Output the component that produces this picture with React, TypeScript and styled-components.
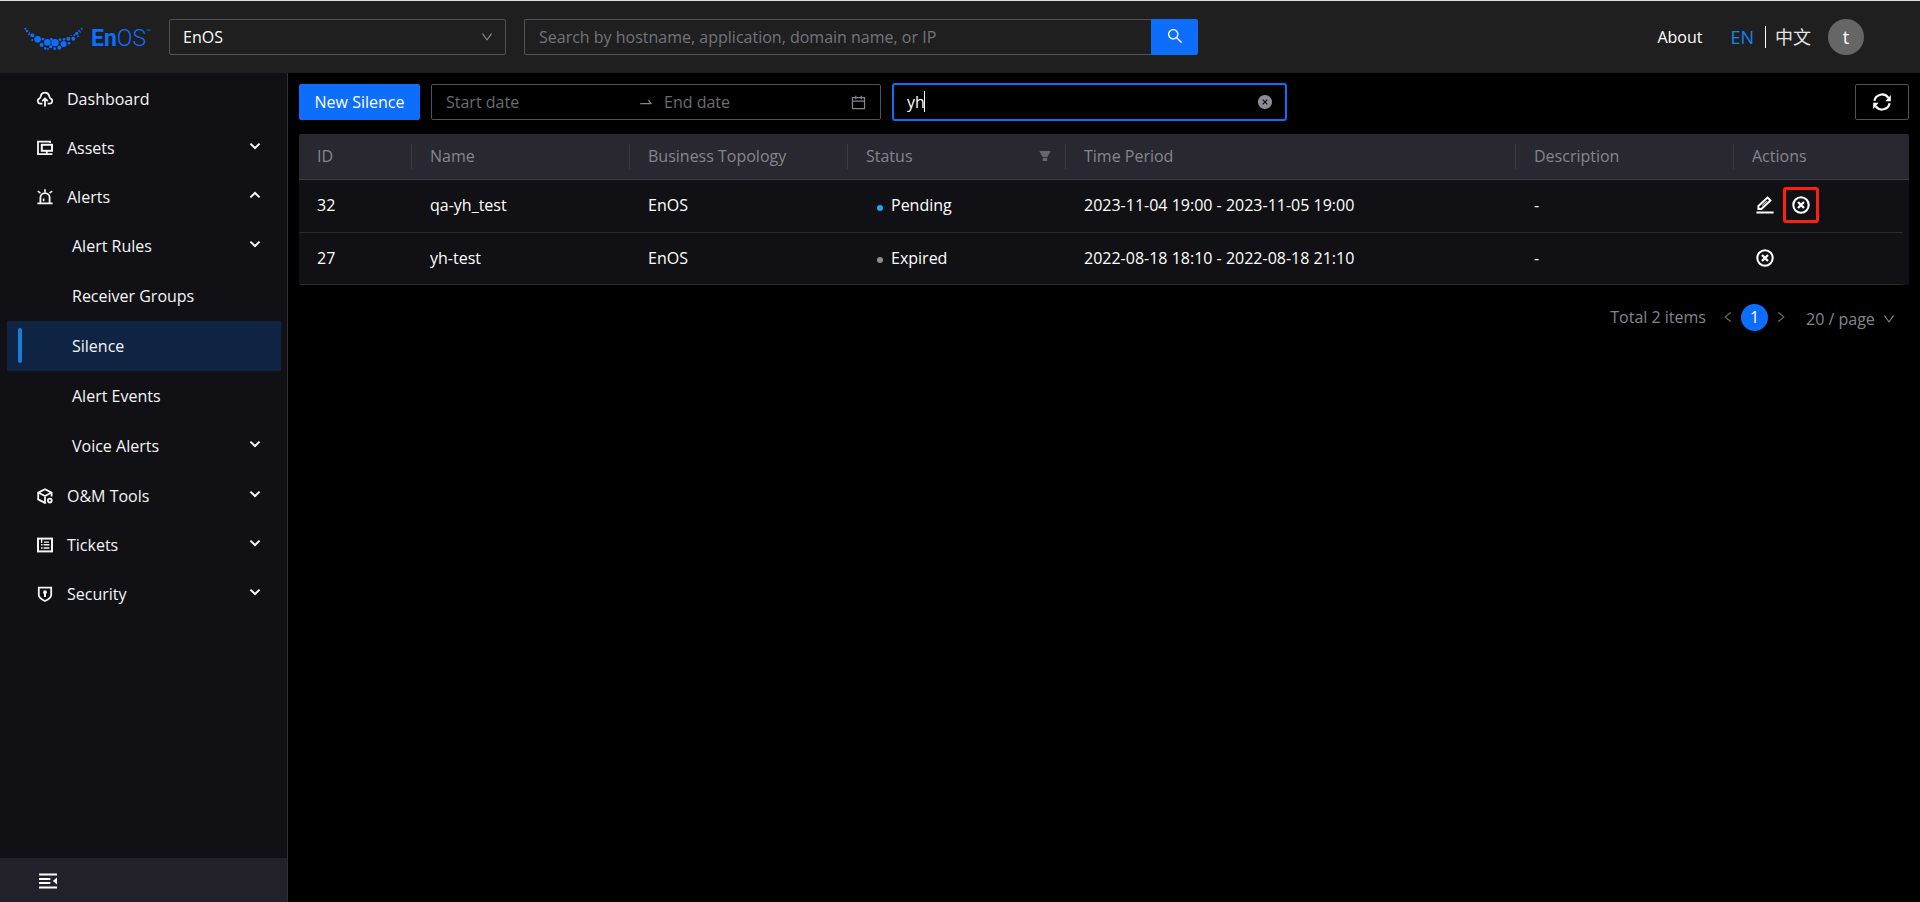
import React from 'react';
import styled, { createGlobalStyle } from 'styled-components';
import {
  AiFillCloseCircle,
  AiFillFilter,
  AiOutlineCalendar,
  AiOutlineDown,
  AiOutlineLeft,
  AiOutlineRight,
  AiOutlineSearch,
  AiOutlineSwapRight,
} from 'react-icons/ai';

const GlobalStyle = createGlobalStyle`
  * { box-sizing: border-box; }
  body {
    margin: 0;
    background: #000;
    color: #fff;
    font: 16px/24px "Open Sans", "Noto Sans CJK SC", sans-serif;
  }
  button, input, select { font: inherit; color: inherit; }
  svg { display: block; flex: none; }
`;

const Page = styled.div`
  display: flex;
  flex-direction: column;
  min-height: 100vh;
`;

/* ---------- header ---------- */

const Header = styled.header`
  display: flex;
  align-items: center;
  height: 73px;
  padding: 0 56px 0 24px;
  background: #1f1f1f;
  border-top: 1px solid #d9dedb;
`;

const Logo = styled.a`
  display: flex;
  align-items: center;
  gap: 8px;
  width: 145px;
  padding-top: 4px;
  color: #0d6efd;
  text-decoration: none;
`;

const LogoText = styled.span`
  display: flex;
  font: 300 23px/24px Roboto, sans-serif;
`;

const LogoBold = styled.b`
  font-weight: 700;
`;

const LogoMark = styled.sup`
  font-size: 8px;
  line-height: 12px;
`;

const SelectBox = styled.div`
  position: relative;
  width: 337px;
  color: #8c8c96;
`;

const SelectControl = styled.select`
  appearance: none;
  width: 100%;
  height: 36px;
  padding: 0 32px 0 13px;
  background: transparent;
  border: 1px solid #52525a;
  border-radius: 2px;
  color: #fff;
`;

const SelectArrow = styled.span`
  position: absolute;
  top: 11px;
  right: 12px;
  pointer-events: none;
`;

const SearchForm = styled.form`
  display: flex;
  width: 674px;
  margin-left: 18px;
`;

const SearchInput = styled.input`
  flex: 1;
  min-width: 0;
  height: 36px;
  padding: 0 14px;
  background: transparent;
  border: 1px solid #52525a;
  border-right: 0;
  border-radius: 2px 0 0 2px;
  outline: 0;
  &::placeholder { color: #74747c; opacity: 1; }
`;

const SearchButton = styled.button`
  display: flex;
  align-items: center;
  justify-content: center;
  width: 47px;
  height: 36px;
  padding: 0 0 2px;
  background: #0d6efd;
  border: 0;
  border-radius: 0 2px 2px 0;
`;

const HeaderRight = styled.div`
  display: flex;
  align-items: center;
  margin-left: auto;
`;

const HeaderLink = styled.a`
  margin-right: 28px;
  color: #fff;
  text-decoration: none;
`;

const Language = styled.button<{ $active?: boolean }>`
  padding: 0;
  background: none;
  border: 0;
  font-size: 18px;
  color: ${(p) => (p.$active ? '#1583f5' : '#e4e4e4')};
`;

const LanguageRule = styled.span`
  width: 1px;
  height: 22px;
  margin: 0 9px 0 11px;
  background: #fff;
`;

const Avatar = styled.button`
  width: 36px;
  height: 36px;
  margin-left: 17px;
  padding: 0;
  background: #666;
  border: 0;
  border-radius: 50%;
  font-size: 18px;
`;

/* ---------- sidebar ---------- */

const Body = styled.div`
  display: flex;
  flex: 1;
`;

const Sidebar = styled.aside`
  display: flex;
  flex-direction: column;
  width: 288px;
  flex: none;
  background: #111115;
  border-right: 1px solid #303036;
`;

const Menu = styled.nav`
  display: flex;
  flex-direction: column;
  flex: 1;
  padding: 1px 6px 0 7px;
`;

const MenuItem = styled.a<{ $sub?: boolean; $active?: boolean }>`
  position: relative;
  display: flex;
  align-items: center;
  gap: 14px;
  height: ${(p) => (p.$sub ? 50 : 49)}px;
  padding: 0 20px 0 ${(p) => (p.$sub ? 65 : 30)}px;
  background: ${(p) => (p.$active ? '#0f2342' : 'transparent')};
  color: #f5f5f7;
  text-decoration: none;
`;

const ActiveBar = styled.span`
  position: absolute;
  left: 11px;
  top: 7px;
  bottom: 8px;
  width: 4px;
  border-radius: 2px;
  background: #177ddc;
`;

const MenuArrow = styled.span`
  margin-left: auto;
  padding-bottom: 4px;
`;

const SidebarFooter = styled.div`
  display: flex;
  align-items: center;
  height: 44px;
  padding: 2px 0 0 39px;
  background: #222129;
`;

const IconButton = styled.button`
  display: flex;
  padding: 0;
  background: none;
  border: 0;
`;

/* ---------- content ---------- */

const Content = styled.main`
  flex: 1;
  min-width: 0;
  padding: 11px 11px 0;
`;

const Toolbar = styled.div`
  display: flex;
  align-items: center;
  gap: 11px;
  margin-bottom: 14px;
`;

const PrimaryButton = styled.button`
  width: 121px;
  height: 36px;
  padding: 0;
  background: #0d6efd;
  border: 0;
  border-radius: 2px;
`;

const RangePicker = styled.div`
  display: flex;
  align-items: center;
  width: 450px;
  height: 36px;
  padding: 0 13px 0 14px;
  border: 1px solid #52525a;
  border-radius: 2px;
  color: #85858f;
`;

const RangeInput = styled.input`
  flex: 1;
  min-width: 0;
  padding: 0;
  background: transparent;
  border: 0;
  outline: 0;
  &::placeholder { color: #6b6b74; opacity: 1; }
`;

const RangeArrow = styled.span`
  padding: 0 10px 0 6px;
`;

const FilterBox = styled.div`
  position: relative;
  width: 395px;
  height: 38px;
  margin: -1px 0;
`;

const FilterInput = styled.input`
  width: 100%;
  height: 100%;
  padding: 0 44px 0 13px;
  background: transparent;
  border: 2px solid #0d6efd;
  border-radius: 3px;
  outline: 0;
  caret-color: transparent;
`;

const Caret = styled.span`
  position: absolute;
  left: 32px;
  top: 8px;
  width: 1px;
  height: 21px;
  background: #fff;
`;

const ClearButton = styled(IconButton)`
  position: absolute;
  right: 14px;
  top: 11px;
  color: #8c8c96;
`;

const RefreshButton = styled.button`
  display: flex;
  align-items: center;
  justify-content: center;
  width: 54px;
  height: 36px;
  margin-left: auto;
  padding: 0 0 1px;
  background: transparent;
  border: 1px solid #52525a;
  border-radius: 2px;
`;

const Table = styled.table`
  width: 100%;
  table-layout: fixed;
  border-collapse: separate;
  border-spacing: 0;
  border-radius: 2px;
  overflow: hidden;
  background: #111115;
`;

const HeadCell = styled.th`
  position: relative;
  height: 46px;
  padding: 0 18px 2px;
  background: #292830;
  border-bottom: 1px solid #3b3b42;
  color: #85858f;
  font-weight: 400;
  text-align: left;

  &:nth-child(-n + 6)::after {
    content: '';
    position: absolute;
    right: 0;
    top: 10px;
    width: 1px;
    height: 25px;
    background: #3b3b42;
  }
`;

const HeadLabel = styled.span`
  display: flex;
  align-items: center;
  justify-content: space-between;
`;

const FilterButton = styled(IconButton)`
  margin-right: -4px;
  color: #66666f;
`;

const Cell = styled.td`
  height: 53px;
  padding: 0 18px 2px;
  border-bottom: 1px solid #29292f;
  tr:last-child > & { height: 52px; }
`;

const Gutter = styled.td`
  padding: 0;
`;

const GutterHead = styled.td`
  padding: 0;
  background: #292830;
  border-bottom: 1px solid #3b3b42;
`;

const Status = styled.span<{ $color: string }>`
  display: flex;
  align-items: center;
  gap: 8px;
  padding-left: 11px;

  &::before {
    content: '';
    width: 6px;
    height: 6px;
    margin-top: 5px;
    border-radius: 50%;
    background: ${(p) => p.$color};
  }
`;

const Actions = styled.div`
  display: flex;
  gap: 18px;
  padding-left: 4px;
`;

const ActionButton = styled(IconButton)`
  position: relative;
`;

const Highlight = styled.span`
  position: absolute;
  inset: -9px;
  border: 3px solid #ff1f0f;
  border-radius: 3px;
`;

const Pagination = styled.nav`
  display: flex;
  align-items: center;
  justify-content: flex-end;
  margin-top: 18px;
  padding-right: 13px;
  color: #85858f;
`;

const PageArrow = styled(IconButton)`
  margin: 0 6px;
  color: #6c6c74;
`;

const Total = styled.span`
  margin-right: 9px;
`;

const CurrentPage = styled.button`
  width: 27px;
  height: 27px;
  padding: 0;
  background: #0d6efd;
  border: 0;
  border-radius: 50%;
  color: #fff;
`;

const PageSize = styled.label`
  position: relative;
  display: flex;
  width: 90px;
  margin-left: 12px;
  padding-top: 4px;
`;

const PageSizeSelect = styled.select`
  appearance: none;
  width: 100%;
  padding: 0;
  background: transparent;
  border: 0;
  color: #85858f;
`;

const PageSizeArrow = styled.span`
  position: absolute;
  right: 0;
  top: 9px;
  pointer-events: none;
`;

/* ---------- drawings ---------- */

const LOGO_DOTS = [
  [33, 41, 3], [38, 48, 4], [45, 52, 2], [44, 58, 3], [54, 61, 6], [54, 75, 3], [70, 73, 10],
  [86, 72, 4], [82, 90, 6], [99, 82, 10], [93, 100, 4], [101, 102, 3], [109, 95, 5], [111, 73, 4],
  [122, 83, 11], [121, 101, 4], [135, 98, 6], [137, 74, 4], [148, 87, 9], [149, 73, 4],
  [162, 71, 6], [164, 85, 4], [177, 71, 6], [171, 61, 2], [180, 60, 3], [187, 55, 5],
  [191, 64, 3], [194, 48, 3], [198, 51, 2], [202, 41, 3],
];

const LogoDots = () => (
  <svg width="59" height="24" viewBox="29 36 177 72" fill="currentColor" aria-hidden="true">
    {LOGO_DOTS.map(([x, y, r]) => (
      <circle key={`${x}-${y}`} cx={x} cy={y} r={r} />
    ))}
  </svg>
);

const CloudIcon = () => (
  <svg width="16" height="16" viewBox="0 0 16 16" fill="none" stroke="currentColor" strokeWidth="1.8">
    <path d="M5.4 12.6H3.6A2.6 2.6 0 0 1 2.4 7.6C3.4 7 3.4 6.4 3.8 5A4.3 4.3 0 0 1 12.2 5C12.6 6.4 12.6 7 13.6 7.6A2.6 2.6 0 0 1 12.4 12.6H10.6" />
    <path d="M8 15.4V8M5.2 10.2L8 7.4L10.8 10.2" />
  </svg>
);

const AssetsIcon = () => (
  <svg width="16" height="16" viewBox="0 0 16 16" fill="none" stroke="currentColor" strokeWidth="1.8">
    <path d="M13 3V1.6H1V14.2H6M4.6 14.2H15.4" />
    <rect x="4.8" y="4.8" width="10.2" height="6" strokeWidth="2" />
    <path d="M9.8 11V14" />
  </svg>
);

const AlertIcon = () => (
  <svg width="16" height="16" viewBox="0 0 16 16" fill="none" stroke="currentColor" strokeWidth="1.8">
    <path d="M0.4 14.4H15.6M3.4 14V8.6A4.6 4.4 0 0 1 12.6 8.6V14" />
    <path d="M8 0.2V3.6M0.8 2L3.4 4.2M15.2 2L12.6 4.2M6.6 12.2V9.6" strokeWidth="1.6" />
  </svg>
);

const CubeIcon = () => (
  <svg width="16" height="16" viewBox="0 0 16 16" fill="none" stroke="currentColor" strokeWidth="1.8">
    <path d="M14.6 8.4V4.6L8 1.2L1.2 4.6V11.4L8 14.9L9 14.4M1.6 4.8L8 8L14.2 4.8M8 8V14.6" />
    <circle cx="12.8" cy="12.6" r="1.9" />
  </svg>
);

const TicketIcon = () => (
  <svg width="16" height="16" viewBox="0 0 16 16" fill="none" stroke="currentColor">
    <rect x="1" y="1.6" width="14" height="12.8" strokeWidth="2" />
    <path d="M4 7.7H5.6M6.6 7.7H12.4M4 10.9H5.6M6.6 10.9H12.4" strokeWidth="1.5" />
    <path d="M4.6 2V6M7 5.2H12" strokeWidth="1.3" />
  </svg>
);

const ShieldIcon = () => (
  <svg width="16" height="16" viewBox="0 0 16 16" fill="none" stroke="currentColor" strokeWidth="1.8">
    <path d="M1.8 1.6H14.2V9C14.2 12 11.6 13.4 8 15C4.4 13.4 1.8 12 1.8 9Z" />
    <circle cx="8" cy="6.2" r="1.9" fill="currentColor" stroke="none" />
    <path d="M8 6.5V11" strokeWidth="2" />
  </svg>
);

const RefreshIcon = () => (
  <svg width="18" height="18" viewBox="0 0 18 18" fill="none" stroke="currentColor" strokeWidth="2.2">
    <path d="M1.4 7.8A7.8 7.8 0 0 1 15.4 4.8M16.6 10.2A7.8 7.8 0 0 1 2.6 13.2" />
    <path d="M17.8 2V8.2H12.4ZM0.2 16V9.8H5.6Z" fill="currentColor" stroke="none" />
  </svg>
);

const EditIcon = () => (
  <svg width="18" height="18" viewBox="0 0 18 18" fill="none" stroke="currentColor" strokeWidth="2">
    <path d="M0.4 16.6H17.6" />
    <path d="M2.4 13V10L11.6 1.6L14.4 4.4L5.4 13Z" />
    <path d="M6.2 9.4L10.8 5.2" strokeWidth="1" />
  </svg>
);

const CancelIcon = () => (
  <svg width="18" height="18" viewBox="0 0 18 18" fill="none" stroke="currentColor" strokeWidth="2.1">
    <circle cx="9" cy="9" r="7.7" />
    <path d="M6 6L12 12M12 6L6 12" strokeWidth="2.4" />
  </svg>
);

const ChevronIcon = ({ up }: { up?: boolean }) => (
  <svg width="12" height="8" viewBox="0 0 12 8" fill="none" stroke="currentColor" strokeWidth="2">
    <path d={up ? 'M1.4 6.4L6 2L10.6 6.4' : 'M1.4 1.6L6 6L10.6 1.6'} />
  </svg>
);

const CollapseIcon = () => (
  <svg width="18" height="16" viewBox="0 0 19 16" fill="currentColor">
    <path d="M0 0H19V2.2H0ZM0 4.8H12V7H0ZM0 9H12V11.2H0ZM0 13.8H19V16H0ZM19 4.4V11.6L14.6 8Z" />
  </svg>
);

/* ---------- data ---------- */

type Item = { label: string; icon?: React.ReactNode; arrow?: 'up' | 'down'; sub?: boolean; active?: boolean };

const MENU: Item[] = [
  { label: 'Dashboard', icon: <CloudIcon /> },
  { label: 'Assets', icon: <AssetsIcon />, arrow: 'down' },
  { label: 'Alerts', icon: <AlertIcon />, arrow: 'up' },
  { label: 'Alert Rules', sub: true, arrow: 'down' },
  { label: 'Receiver Groups', sub: true },
  { label: 'Silence', sub: true, active: true },
  { label: 'Alert Events', sub: true },
  { label: 'Voice Alerts', sub: true, arrow: 'down' },
  { label: 'O&M Tools', icon: <CubeIcon />, arrow: 'down' },
  { label: 'Tickets', icon: <TicketIcon />, arrow: 'down' },
  { label: 'Security', icon: <ShieldIcon />, arrow: 'down' },
];

const COLUMNS = [
  { title: 'ID', width: 113 },
  { title: 'Name', width: 218 },
  { title: 'Business Topology', width: 218 },
  { title: 'Status', width: 218, filter: true },
  { title: 'Time Period', width: 450 },
  { title: 'Description', width: 218 },
  { title: 'Actions', width: 169 },
];

const ROWS = [
  { id: 32, name: 'qa-yh_test', status: 'Pending', color: '#1aabe8', period: '2023-11-04 19:00 - 2023-11-05 19:00', editable: true },
  { id: 27, name: 'yh-test', status: 'Expired', color: '#8c8c8c', period: '2022-08-18 18:10 - 2022-08-18 21:10', editable: false },
];

export default function App() {
  return (
    <Page>
      <GlobalStyle />
      <Header>
        <Logo href="#" aria-label="EnOS home">
          <LogoDots />
          <LogoText>
            <LogoBold>En</LogoBold>OS<LogoMark>™</LogoMark>
          </LogoText>
        </Logo>
        <SelectBox>
          <SelectControl aria-label="Organization">
            <option>EnOS</option>
          </SelectControl>
          <SelectArrow><AiOutlineDown size={14} /></SelectArrow>
        </SelectBox>
        <SearchForm onSubmit={(e) => e.preventDefault()}>
          <SearchInput aria-label="Search" placeholder="Search by hostname, application, domain name, or IP" />
          <SearchButton aria-label="Search"><AiOutlineSearch size={18} /></SearchButton>
        </SearchForm>
        <HeaderRight>
          <HeaderLink href="#">About</HeaderLink>
          <Language $active>EN</Language>
          <LanguageRule />
          <Language>中文</Language>
          <Avatar>t</Avatar>
        </HeaderRight>
      </Header>
      <Body>
        <Sidebar>
          <Menu>
            {MENU.map((item) => (
              <MenuItem key={item.label} href="#" $sub={item.sub} $active={item.active}>
                {item.active && <ActiveBar />}
                {item.icon}
                {item.label}
                {item.arrow && <MenuArrow><ChevronIcon up={item.arrow === 'up'} /></MenuArrow>}
              </MenuItem>
            ))}
          </Menu>
          <SidebarFooter>
            <IconButton aria-label="Collapse menu"><CollapseIcon /></IconButton>
          </SidebarFooter>
        </Sidebar>
        <Content>
          <Toolbar>
            <PrimaryButton>New Silence</PrimaryButton>
            <RangePicker>
              <RangeInput aria-label="Start date" placeholder="Start date" />
              <RangeArrow><AiOutlineSwapRight size={16} /></RangeArrow>
              <RangeInput aria-label="End date" placeholder="End date" />
              <AiOutlineCalendar size={17} />
            </RangePicker>
            <FilterBox>
              <FilterInput aria-label="Filter silences" defaultValue="yh" />
              <Caret />
              <ClearButton aria-label="Clear"><AiFillCloseCircle size={16} /></ClearButton>
            </FilterBox>
            <RefreshButton aria-label="Refresh"><RefreshIcon /></RefreshButton>
          </Toolbar>
          <Table>
            <colgroup>
              {COLUMNS.map((c) => <col key={c.title} width={c.width} />)}
              <col width={6} />
            </colgroup>
            <thead>
              <tr>
                {COLUMNS.map((c) => (
                  <HeadCell key={c.title} scope="col">
                    <HeadLabel>
                      {c.title}
                      {c.filter && <FilterButton aria-label="Filter by status"><AiFillFilter size={14} /></FilterButton>}
                    </HeadLabel>
                  </HeadCell>
                ))}
                <GutterHead />
              </tr>
            </thead>
            <tbody>
              {ROWS.map((r) => (
                <tr key={r.id}>
                  <Cell>{r.id}</Cell>
                  <Cell>{r.name}</Cell>
                  <Cell>EnOS</Cell>
                  <Cell><Status $color={r.color}>{r.status}</Status></Cell>
                  <Cell>{r.period}</Cell>
                  <Cell>-</Cell>
                  <Cell>
                    <Actions>
                      {r.editable && <ActionButton aria-label="Edit"><EditIcon /></ActionButton>}
                      <ActionButton aria-label="Cancel">
                        <CancelIcon />
                        {r.editable && <Highlight />}
                      </ActionButton>
                    </Actions>
                  </Cell>
                  <Gutter />
                </tr>
              ))}
            </tbody>
          </Table>
          <Pagination aria-label="Pagination">
            <Total>Total 2 items</Total>
            <PageArrow aria-label="Previous page"><AiOutlineLeft size={14} /></PageArrow>
            <CurrentPage>1</CurrentPage>
            <PageArrow aria-label="Next page"><AiOutlineRight size={14} /></PageArrow>
            <PageSize>
              <PageSizeSelect aria-label="Page size">
                <option>20 / page</option>
              </PageSizeSelect>
              <PageSizeArrow><AiOutlineDown size={14} /></PageSizeArrow>
            </PageSize>
          </Pagination>
        </Content>
      </Body>
    </Page>
  );
}
